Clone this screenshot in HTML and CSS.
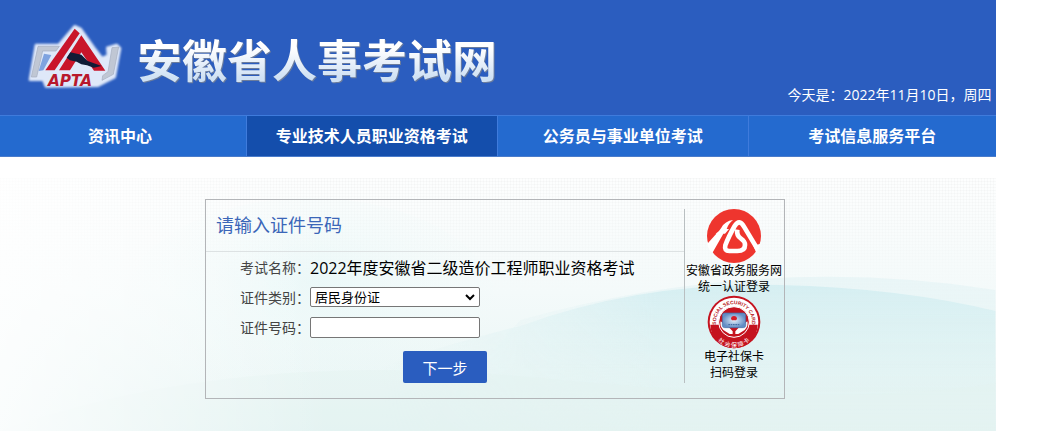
FILE: index.html
```html
<!DOCTYPE html>
<html lang="zh-CN">
<head>
<meta charset="utf-8">
<meta name="viewport" content="width=device-width, initial-scale=1">
<title>安徽省人事考试网</title>
<link rel="stylesheet" href="styles.css">
</head>
<body>
<div class="page">
  <header class="header">
    <div class="brand">
      <svg class="logo" viewBox="0 0 330 255" aria-hidden="true">
        <defs><filter id="soft" x="-10%" y="-10%" width="120%" height="120%"><feGaussianBlur stdDeviation="3"/></filter></defs>
        <path d="M48 90H116L164 34L182 42L226 104L246 130L264 122L262 98L290 90L300 100L284 186L234 212L78 214L70 194L30 194Z" fill="#dfe8f9" stroke="#dfe8f9" stroke-width="8" stroke-linejoin="round" filter="url(#soft)"/>
        <path d="M54 94H118L108 108H68L50 186H34Z" fill="#c0c7d4" stroke="#a5aec0" stroke-width="2"/>
        <path d="M276 98L296 96L280 178L246 196L248 182L264 170Z" fill="#c0c7d4" stroke="#a5aec0" stroke-width="2"/>
        <path d="M72 116L56 168L70 166L94 120Z" fill="#7fa3e0"/>
        <path d="M76 166L164 41L179 55L104 166Z" fill="#c9152a"/>
        <path d="M117 166L184 61L256 167H222L184 112L150 166Z" fill="#c9152a"/>
        <path d="M140 128L151 112L184 119L203 138L245 153L221 158L201 151L184 148L170 140L150 136Z" fill="#101c36"/>
        <text x="84" y="212" class="logo-text">APTA</text>
      </svg>
      <h1 class="site-title">安徽省人事考试网</h1>
    </div>
    <p class="date">今天是：2022年11月10日，周四</p>
  </header>
  <nav class="nav">
    <a href="#news">资讯中心</a>
    <a href="#pro" class="active" aria-current="page">专业技术人员职业资格考试</a>
    <a href="#civil">公务员与事业单位考试</a>
    <a href="#service">考试信息服务平台</a>
  </nav>
  <main class="main">
    <svg class="scene" viewBox="0 0 995 253" preserveAspectRatio="none" aria-hidden="true">
      <defs>
        <linearGradient id="hill" x1="0" y1="0" x2="0" y2="1"><stop offset="0" stop-color="#cfecf0" stop-opacity=".75"/><stop offset="1" stop-color="#e2f3f1" stop-opacity=".2"/></linearGradient>
        <linearGradient id="fade"><stop offset="0" stop-color="#000"/><stop offset=".45" stop-color="#fff"/></linearGradient>
        <mask id="hill-mask"><rect x="380" width="615" height="253" fill="url(#fade)"/></mask>
        <radialGradient id="glow" cx=".5" cy=".4" r=".6"><stop offset="0" stop-color="#e4f7f7" stop-opacity=".6"/><stop offset="1" stop-color="#f3fbfa" stop-opacity="0"/></radialGradient>
        <linearGradient id="left"><stop offset="0" stop-color="#fff" stop-opacity=".8"/><stop offset="1" stop-color="#fff" stop-opacity="0"/></linearGradient>
      </defs>
      <ellipse cx="310" cy="125" rx="185" ry="105" fill="url(#glow)"/>
      <g mask="url(#hill-mask)">
        <path d="M520 142Q760 75 995 112V253H420Z" fill="url(#hill)" opacity=".4"/>
        <path d="M520 148Q640 104 780 107Q900 110 995 133V253H380V190Q440 168 520 148Z" fill="url(#hill)"/>
      </g>
      <path d="M0 253Q230 170 540 200T995 205V253Z" fill="#e4f3f1" opacity=".4"/>
      <rect width="330" height="253" fill="url(#left)"/>
    </svg>
    <section class="panel">
      <form class="login">
        <h2 class="heading">请输入证件号码</h2>
        <div class="fields">
          <span class="label">考试名称：</span><span class="exam">2022年度安徽省二级造价工程师职业资格考试</span>
          <label class="label" for="type">证件类别：</label>
          <select id="type" class="control"><option>居民身份证</option></select>
          <label class="label" for="number">证件号码：</label>
          <input id="number" class="control" type="text">
        </div>
        <button class="next" type="button">下一步</button>
      </form>
      <aside class="side">
        <a href="#gov">
          <svg class="badge" viewBox="0 0 162 162" aria-hidden="true">
            <circle cx="81" cy="81" r="81" fill="#ee352e"/>
            <path d="M1 104L28 74H26Q38 66 43 56Q54 36 78 33Q64 44 59 60H66L54 74H49L16 132Q4 122 1 104Z" fill="#fff"/>
            <path d="M152 121L111 53Q97 28 83 51Q64 84 55 109Q51 126 67 126H91Q114 126 114 108Q114 97 102 89Q88 80 91 62" fill="none" stroke="#fff" stroke-width="14" stroke-linejoin="round"/>
            <path d="M139 110L161 104L148 132Z" fill="#fff"/>
          </svg>
          <span>安徽省政务服务网<br>统一认证登录</span>
        </a>
        <a href="#card">
          <svg class="badge" viewBox="0 0 162 162" aria-hidden="true">
            <defs>
              <path id="arc-top" d="M28 92A54 54 0 1 1 134 92"/>
              <path id="arc-bottom" d="M12 88A69 69 0 0 0 150 88"/>
              <radialGradient id="card"><stop offset="0" stop-color="#e3effa"/><stop offset="1" stop-color="#638dc4"/></radialGradient>
            </defs>
            <circle cx="81" cy="81" r="79" fill="#c5131f"/>
            <circle cx="81" cy="81" r="73" fill="#fff"/>
            <path d="M10 89A71 71 0 0 0 152 89Z" fill="#c5131f"/>
            <circle cx="81" cy="81" r="46" fill="#c5131f" stroke="#fff" stroke-width="3"/>
            <text class="seal-en"><textPath href="#arc-top" startOffset="50%">SOCIAL SECURITY CARD</textPath></text>
            <text class="seal-cn"><textPath href="#arc-bottom" startOffset="50%">社 会 保 障 卡</textPath></text>
            <path d="M41 79Q37 92 49 105L68 117H77V109L65 96L54 94L47 83ZM121 79Q125 92 113 105L94 117H85V109L97 96L108 94L115 83Z" fill="#fff"/>
            <rect x="46" y="54" width="70" height="44" rx="7" fill="url(#card)" stroke="#416ca8" stroke-width="2"/>
            <path d="M72 72A9 9 0 1 1 90 72L87 76H75Z" fill="#d51e29"/>
            <path d="M64 89H98" stroke="#38649d" stroke-width="3" stroke-dasharray="5 2"/>
          </svg>
          <span>电子社保卡<br>扫码登录</span>
        </a>
      </aside>
    </section>
  </main>
</div>
</body>
</html>
```
FILE: styles.css
```css
* { box-sizing: border-box; }
body {
  margin: 0;
  background: #fff;
  color: #000;
  font-family: "Open Sans", "Noto Sans CJK SC", sans-serif;
}
h1, h2, p { margin: 0; }
a { color: inherit; text-decoration: none; }
.page { width: 95%; min-height: 100vh; display: flex; flex-direction: column; }
.header {
  display: flex;
  justify-content: space-between;
  align-items: flex-end;
  background: #2b5dbf;
  color: #fff;
}
.brand { display: flex; align-items: center; gap: 7px; padding: 15px 0 15px 20px; }
.logo { width: 110px; height: 85px; }
.logo-text { font: italic bold 46px "DejaVu Sans", sans-serif; fill: #b8182c; }
.site-title {
  padding-top: 6px;
  font-size: 45px;
  line-height: 60px;
  font-weight: 700;
  background: linear-gradient(#fff 35%, #cfe1f4 80%);
  background-clip: text;
  -webkit-background-clip: text;
  color: transparent;
  filter: drop-shadow(1px 1px 0 #6b7c9c);
}
.date { padding: 0 4px 10px 0; font-size: 14px; line-height: 20px; }
.nav {
  display: grid;
  grid-template-columns: 246fr 251fr 251fr 248fr;
  border-top: 1px solid #3f7bdc;
  border-bottom: 1px solid #4a7ccb;
  background: #246acf;
  color: #fff;
  font-size: 16px;
  font-weight: 700;
  line-height: 40px;
  text-align: center;
}
.nav a + a { border-left: 1px solid #3f7bdc; }
.nav a:first-child { padding-right: 6px; }
.nav .active { background: #144eac; }
.main {
  position: relative;
  flex: 1;
  margin-top: 21px;
  padding: 21px 211px 32px 205px;
  background:
    linear-gradient(rgba(255, 255, 255, 0), #f4fafa 45%, #e5f4f3),
    repeating-linear-gradient(90deg, rgba(0, 0, 0, .02) 0 1px, transparent 1px 3px),
    repeating-linear-gradient(rgba(0, 0, 0, .02) 0 1px, transparent 1px 3px),
    #fdfefe;
}
.scene { position: absolute; inset: 0; width: 100%; height: 100%; }
.panel {
  position: relative;
  display: flex;
  padding-bottom: 15px;
  border: 1px solid #b3b5b8;
}
.login { flex: 1; display: flex; flex-direction: column; }
.heading {
  padding: 10px;
  border-bottom: 1px solid #dde2e3;
  color: #3b66b8;
  font-size: 18px;
  font-weight: 400;
  line-height: 31px;
}
.fields {
  display: grid;
  grid-template-columns: 70px 1fr;
  grid-auto-rows: 30px;
  align-items: center;
  padding-left: 34px;
}
.label { color: #444; font-size: 14px; }
.exam { font-size: 16px; white-space: nowrap; }
.control {
  width: 170px;
  border: 1px solid #767676;
  border-radius: 2px;
  background-color: #fff;
  color: #000;
  font: 13px/15px "Noto Sans CJK SC", sans-serif;
}
select.control {
  appearance: none;
  height: 20px;
  padding: 0 20px 2px 4px;
  background-image: url("data:image/svg+xml,%3Csvg xmlns='http://www.w3.org/2000/svg' width='10' height='7'%3E%3Cpath d='M1 1l4 4 4-4' fill='none' stroke='%23000' stroke-width='2'/%3E%3C/svg%3E");
  background-position: right 4px center;
  background-repeat: no-repeat;
}
input.control { height: 21px; padding: 1px 2px; }
.next {
  width: 84px;
  height: 32px;
  margin: 9px 0 0 197px;
  padding: 0;
  border: 0;
  border-radius: 2px;
  background: #2a5dbf;
  color: #fff;
  font: 15px "Open Sans", "Noto Sans CJK SC", sans-serif;
}
.side {
  width: 100px;
  margin-top: 9px;
  border-left: 1px solid #b9bfc1;
  font-size: 12px;
  line-height: 16px;
  text-align: center;
}
.side a { display: block; white-space: nowrap; }
.badge { display: block; width: 54px; height: 54px; margin: 0 auto; }
.seal-en { font: bold 15px "Liberation Sans", sans-serif; fill: #b61622; text-anchor: middle; }
.seal-cn { font: 18px "Noto Sans CJK SC", sans-serif; fill: #fff; text-anchor: middle; }
```
